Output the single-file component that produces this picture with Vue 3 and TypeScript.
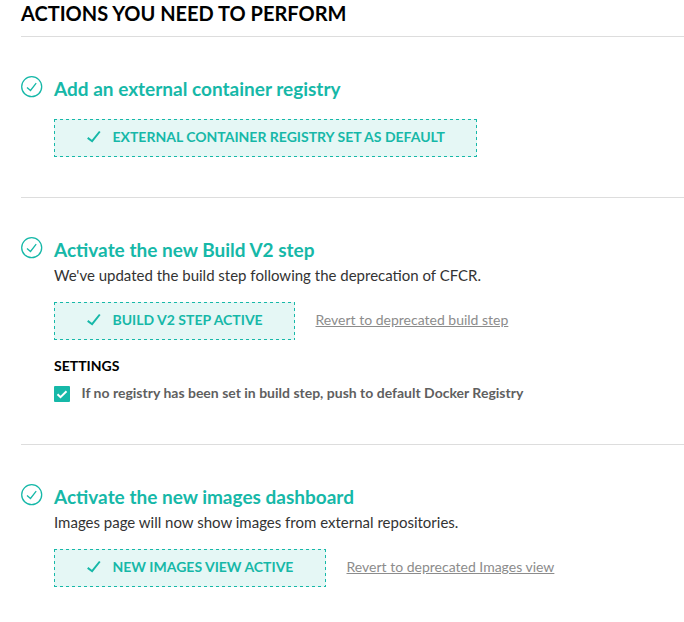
<script setup lang="ts">
interface Action {
  title: string
  description?: string
  status: string
  width: number
  revert?: string
  setting?: string
}

const actions: Action[] = [
  { title: 'Add an external container registry', status: 'External container registry set as default', width: 423 },
  {
    title: 'Activate the new Build V2 step',
    description: "We've updated the build step following the deprecation of CFCR.",
    status: 'Build V2 step active',
    width: 241,
    revert: 'Revert to deprecated build step',
    setting: 'If no registry has been set in build step, push to default Docker Registry',
  },
  {
    title: 'Activate the new images dashboard',
    description: 'Images page will now show images from external repositories.',
    status: 'New images view active',
    width: 272,
    revert: 'Revert to deprecated Images view',
  },
]
</script>

<template>
  <main class="page">
    <h1>ACTIONS YOU NEED TO PERFORM</h1>
    <section v-for="a in actions" :key="a.title" class="action">
      <svg class="ring" width="22" height="22" viewBox="0 0 22 22">
        <circle cx="10.7" cy="10.7" r="10" />
        <path d="M6 11.400l3.500 3.100 5.700-7.300" />
      </svg>
      <div class="content">
        <h2>{{ a.title }}</h2>
        <p v-if="a.description">{{ a.description }}</p>
        <div class="row">
          <div class="status" :style="{ width: a.width + 'px' }">
            <svg width="14" height="14" viewBox="0 0 14 14"><path d="M.7 7.900l4.400 3.300 7.700-9.700" /></svg>
            <span>{{ a.status }}</span>
          </div>
          <a v-if="a.revert">{{ a.revert }}</a>
        </div>
        <template v-if="a.setting">
          <h3>SETTINGS</h3>
          <label class="setting">
            <span class="box"><svg width="16" height="16" viewBox="0 0 16 16"><path d="M3.500 8.200l3 3 6-6" /></svg></span>
            <span class="label">{{ a.setting }}</span>
          </label>
        </template>
      </div>
    </section>
  </main>
</template>

<style>
body { background: #fff; overflow: hidden; }
</style>

<style scoped>
.page { padding-left: 21px; font-family: Lato, sans-serif; color: #333; }
h1, h2, h3, p { margin: 0; }
h1 { height: 36px; box-sizing: border-box; padding-top: 1px; font-size: 20px; line-height: 24px; font-weight: 700; color: #000; white-space: nowrap; }
.action { display: flex; border-top: 1px solid #ddd; padding: 39px 0 40px; }
.ring { flex: none; margin-right: 11px; fill: none; stroke: #16b8a8; stroke-width: 1.3; }
h2 { height: 26px; font-size: 19px; line-height: 26px; font-weight: 700; color: #16b8a8; white-space: nowrap; }
p { height: 22px; font-size: 15px; line-height: 25px; white-space: nowrap; }
.row { display: flex; align-items: center; gap: 20.500px; margin-top: 17px; }
.status {
  display: flex; align-items: center; box-sizing: border-box; height: 38px; padding: 1px 1px 4px 33px;
  background-color: #e5f7f5;
  background-image:
    linear-gradient(90deg, #16b8a8 3.500px, transparent 3.500px),
    linear-gradient(90deg, #16b8a8 3.500px, transparent 3.500px),
    linear-gradient(180deg, #16b8a8 3.500px, transparent 3.500px),
    linear-gradient(180deg, #16b8a8 3.500px, transparent 3.500px);
  background-size: 6px 1px, 6px 1px, 1px 6px, 1px 6px;
  background-position: 0 0, 0 100%, 0 0, 100% 0;
  background-repeat: repeat-x, repeat-x, repeat-y, repeat-y;
  color: #16b8a8; font-size: 14px; font-weight: 700; text-transform: uppercase; white-space: nowrap;
}
.status svg { margin: 1px 11.500px 0 0; fill: none; stroke: currentColor; stroke-width: 2; }
a { padding-bottom: 3px; font-size: 14px; color: #8c8c8c; text-decoration: underline; white-space: nowrap; }
h3 { margin-top: 17px; font-size: 14px; line-height: 18px; color: #000; }
.setting { display: flex; align-items: center; gap: 11.500px; margin-top: 10px; height: 18px; padding-bottom: 1px; font-size: 14px; font-weight: 700; color: #5f5f5f; white-space: nowrap; }
.label { padding-bottom: 3px; }
.box { width: 16px; height: 16px; background: #16b8a8; border-radius: 1px; }
.box svg { display: block; fill: none; stroke: #fff; stroke-width: 2; }
</style>
